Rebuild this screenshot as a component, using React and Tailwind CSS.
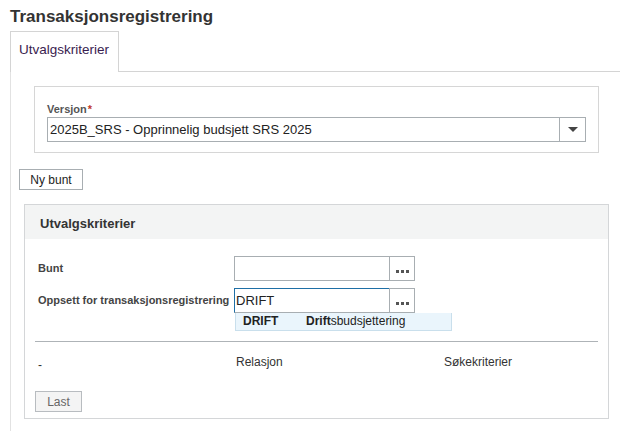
import React from "react";

const Dots = () => (
  <div className="flex gap-[2px] mt-[6px]">
    <span className="w-[3px] h-[3px] bg-[#555]" />
    <span className="w-[3px] h-[3px] bg-[#555]" />
    <span className="w-[3px] h-[3px] bg-[#555]" />
  </div>
);

const LookupField = ({ value, focused }) => (
  <div className="flex h-[25px]">
    <div
      className={`w-[155px] h-full border ${
        focused ? "border-[#1e6fa6] border-r-[#a8aeb2] border-b-[#a8aeb2]" : "border-[#a8aeb2]"
      } border-r-0 px-[1px] text-[13px] leading-[23px] text-[#222]`}
    >
      {value}
    </div>
    <button className="w-[26px] h-full border border-[#a8aeb2] flex items-center justify-center bg-white">
      <Dots />
    </button>
  </div>
);

export default function App() {
  return (
    <div className="w-[620px] h-[431px] bg-white overflow-hidden font-['Liberation_Sans',Arial,sans-serif] text-[#333]">
      <h1 className="pl-[10px] pt-[6px] h-[31px] text-[17px] font-bold leading-[22px] text-[#333]">
        Transaksjonsregistrering
      </h1>

      <div className="flex h-[41px]">
        <div className="ml-[10px] w-[109px] border border-b-0 border-[#d4d4d4] pl-[8px] pt-[8px] text-[13.5px] text-[#3a1d4f]">
          Utvalgskriterier
        </div>
        <div className="flex-1 border-b border-[#d4d4d4]" />
      </div>

      <div className="ml-[10px] border-l border-[#e2e2e2] h-[360px] pt-[14px]">
        <div className="ml-[23px] w-[565px] h-[67px] border border-[#d6d6d6] pl-[12px] pt-[15px]">
          <div className="text-[11px] font-bold text-[#555] leading-[14px] h-[15px]">
            Versjon<span className="text-[#c0392b] ml-[1px]">*</span>
          </div>
          <div className="flex w-[539px] h-[25px] border border-[#a8aeb2]">
            <div className="flex-1 pl-[2px] text-[13px] leading-[23px] text-[#222]">
              2025B_SRS - Opprinnelig budsjett SRS 2025
            </div>
            <div className="w-[26px] border-l border-[#a8aeb2] flex items-center justify-center">
              <div className="w-0 h-0 border-l-[5px] border-r-[5px] border-t-[5px] border-l-transparent border-r-transparent border-t-[#444]" />
            </div>
          </div>
        </div>

        <button className="ml-[8px] mt-[16px] w-[64px] h-[21px] border border-[#a8aeb2] bg-white text-[12px] text-[#222] leading-[18px]">
          Ny bunt
        </button>

        <div className="ml-[13px] mt-[13px] w-[585px] h-[215px] border border-[#d4d6d8]">
          <div className="h-[34px] bg-[#f3f4f4] pl-[15px] pt-[9px] text-[13px] font-bold text-[#333]">
            Utvalgskriterier
          </div>

          <div className="pl-[13px] pt-[17px]">
            <div className="flex items-center">
              <div className="w-[196px] text-[11px] font-bold text-[#444]">Bunt</div>
              <LookupField value="" />
            </div>
            <div className="flex items-center mt-[7px]">
              <div className="w-[196px] text-[11px] font-bold text-[#444] whitespace-nowrap">
                Oppsett for transaksjonsregistrering
              </div>
              <LookupField value="DRIFT" focused />
            </div>
            <div className="ml-[197px] w-[217px] h-[18px] border border-[#c9dfec] border-t-0 bg-[#eaf5fc] flex items-center text-[12px] text-[#222]">
              <span className="w-[63px] shrink-0 ml-[7px] font-bold">DRIFT</span>
              <span>
                <b>Drift</b>sbudsjettering
              </span>
            </div>
          </div>

          <div className="ml-[10px] mt-[10px] w-[563px] border-t border-[#aeb3b7]" />

          <div className="flex pl-[13px] pt-[11px] h-[47px] text-[12px] text-[#333]">
            <span className="w-[198px] pt-[3px]">-</span>
            <span className="w-[208px]">Relasjon</span>
            <span>Søkekriterier</span>
          </div>

          <button className="ml-[10px] w-[47px] h-[21px] border border-[#b8bcc0] bg-[#f4f4f4] text-[12px] text-[#666] leading-[18px]">
            Last
          </button>
        </div>
      </div>
    </div>
  );
}
